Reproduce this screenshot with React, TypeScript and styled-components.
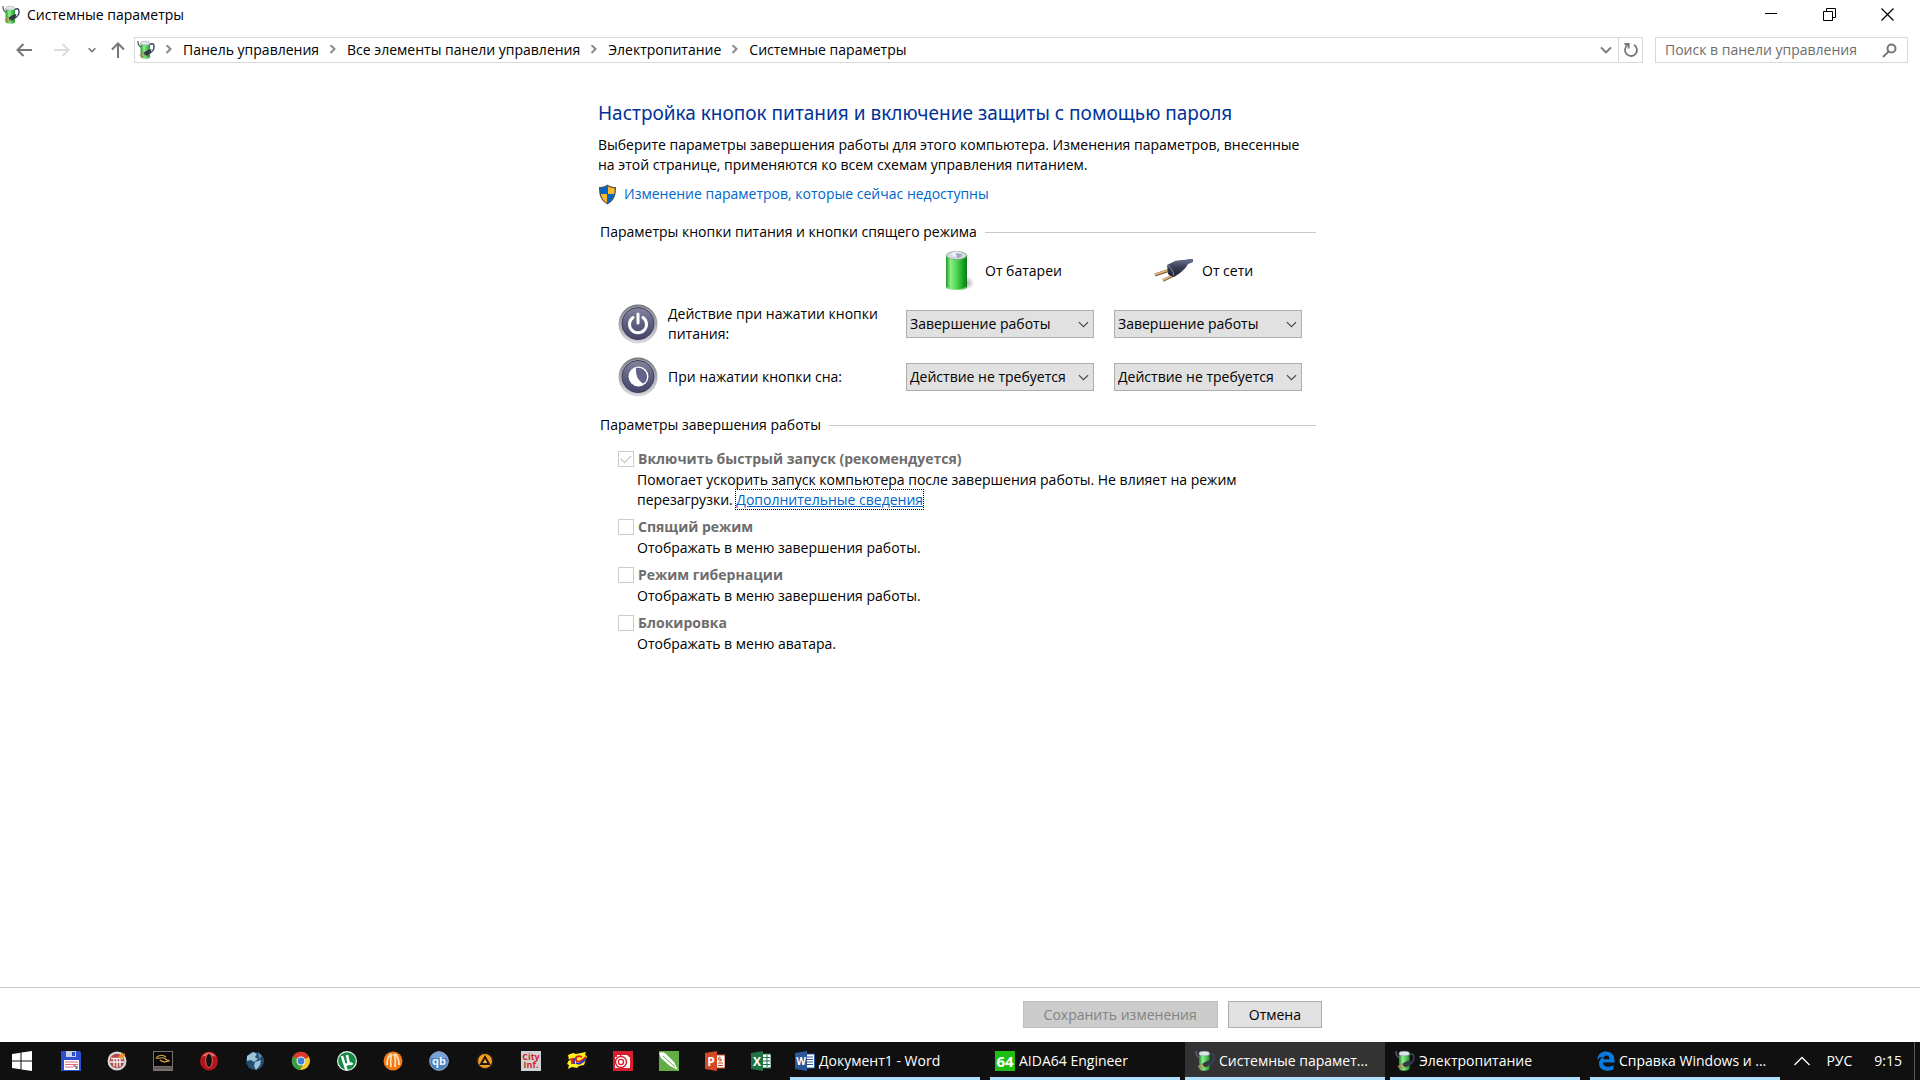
import React from "react";
import styled, { createGlobalStyle, css } from "styled-components";

const GlobalStyle = createGlobalStyle`
  *, *::before, *::after { box-sizing: border-box; }
  body {
    margin: 0;
    background: #fff;
    color: #000;
    font-family: "Open Sans", "Noto Sans", sans-serif;
    font-size: 14px;
    line-height: 20px;
  }
  button, input, select { font: inherit; }
  svg { display: block; flex: none; }
`;

const Window = styled.div`
  display: flex;
  flex-direction: column;
  min-height: 100vh;
`;

const TitleBar = styled.header`
  display: flex;
  align-items: center;
  justify-content: space-between;
  height: 30px;
  padding: 0 4px 0 2px;
`;

const Caption = styled.h1`
  display: flex;
  align-items: center;
  gap: 7px;
  margin: 0;
  font-size: 14px;
  font-weight: 400;
`;

const CaptionButtons = styled.div`
  display: flex;
  align-self: stretch;
`;

const PlainButton = styled.button`
  display: flex;
  align-items: center;
  justify-content: center;
  border: 0;
  padding: 0;
  background: none;
  color: inherit;
`;

const CaptionButton = styled(PlainButton)`
  width: 58px;
  height: 28px;
`;

const NavBar = styled.nav`
  display: flex;
  height: 26px;
  margin-top: 7px;
  padding-right: 12px;
`;

const History = styled.div`
  display: grid;
  grid-template-columns: 48px 28px 32px 20px;
  width: 134px;
  flex: none;
  color: #767676;
`;

const AddressBar = styled.div`
  display: flex;
  flex: 1;
  align-items: center;
  min-width: 0;
  border: 1px solid #d9d9d9;
  padding-left: 2px;
`;

const Crumbs = styled.ol`
  display: flex;
  flex: 1;
  margin: 0;
  padding: 0;
  list-style: none;
  white-space: nowrap;
  overflow: hidden;
`;

const Crumb = styled.li`
  display: flex;
  align-items: center;
  a { color: #000; text-decoration: none; }
  svg { margin: 0 11px 0 10px; }
`;

const AddressButton = styled(PlainButton)<{ $divided?: boolean }>`
  width: 24px;
  height: 24px;
  color: #767676;
  ${(p) => p.$divided && css`border-left: 1px solid #d9d9d9;`}
`;

const Search = styled.label`
  display: flex;
  align-items: center;
  width: 253px;
  margin-left: 12px;
  border: 1px solid #d9d9d9;
  padding: 0 10px 0 9px;
  color: #767676;
`;

const SearchInput = styled.input`
  flex: 1;
  min-width: 0;
  border: 0;
  padding: 0;
  outline: 0;
  background: none;
  &::placeholder { color: #6d6d6d; opacity: 1; }
`;

const Content = styled.main`
  flex: 1;
  width: 100%;
  max-width: 724px;
  margin: 0 auto;
  padding-top: 37px;
`;

const Heading = styled.h2`
  margin: 0 0 9px;
  color: #003399;
  font-family: "Noto Sans", "Open Sans", sans-serif;
  font-size: 19px;
  font-weight: 400;
  line-height: 26px;
`;

const Intro = styled.p`
  margin: 0 0 8px;
  white-space: nowrap;
`;

const AdminLink = styled.a`
  display: flex;
  align-items: center;
  gap: 7px;
  height: 22px;
  margin-bottom: 17px;
  color: #0066cc;
  text-decoration: none;
`;

const SectionTitle = styled.h3`
  display: flex;
  align-items: center;
  gap: 8px;
  margin: 0 6px 9px 2px;
  font-size: 14px;
  font-weight: 400;
  white-space: nowrap;
  &::after {
    content: "";
    flex: 1;
    height: 1px;
    background: #c8c8c8;
  }
`;

const ButtonGrid = styled.div`
  display: grid;
  grid-template-columns: 268px 188px 188px;
  grid-auto-rows: 40px;
  gap: 13px 20px;
  align-items: center;
  padding-left: 20px;
  margin-bottom: 18px;
`;

const Source = styled.div<{ $gap: number }>`
  display: flex;
  align-items: center;
  gap: ${(p) => p.$gap}px;
  padding-left: 40px;
`;

const ActionLabel = styled.div`
  display: flex;
  align-items: center;
  gap: 10px;
  grid-column: 1;
`;

const SelectBox = styled.div`
  display: grid;
  align-items: center;
  color: #444;
  & > * { grid-area: 1 / 1; }
  svg { justify-self: end; margin-right: 5px; pointer-events: none; }
`;

const Select = styled.select`
  appearance: none;
  width: 100%;
  height: 28px;
  border: 1px solid #adadad;
  border-radius: 0;
  padding: 0 20px 0 3px;
  background: #e1e1e1;
  color: #000;
`;

const Options = styled.div`
  padding: 4px 0 0 20px;
`;

const Option = styled.div`
  margin-bottom: 6px;
`;

const OptionLabel = styled.label`
  display: flex;
  align-items: center;
  gap: 4px;
  height: 22px;
  color: #6d6d6d;
  font-weight: 700;
`;

const Checkbox = styled.input`
  appearance: none;
  display: grid;
  place-items: center;
  width: 16px;
  height: 16px;
  margin: 0;
  border: 1px solid #ccc;
  background: #fff;
  &:checked::after {
    content: "";
    width: 10px;
    height: 6px;
    border: solid #bdbdbd;
    border-width: 0 0 1px 1px;
    transform: rotate(-45deg) translate(1px, -1px);
  }
`;

const OptionText = styled.p`
  margin: 0 0 0 19px;
`;

const MoreLink = styled.a`
  color: #0066cc;
  outline: 1px dotted #000;
`;

const Footer = styled.footer`
  border-top: 1px solid #c8c8c8;
  padding: 13px 0 14px;
`;

const FooterInner = styled.div`
  display: flex;
  justify-content: flex-end;
  gap: 10px;
  max-width: 724px;
  margin: 0 auto;
`;

const PushButton = styled.button`
  height: 27px;
  border: 1px solid #adadad;
  padding: 0 20px;
  background: #e1e1e1;
  color: #000;
  &:disabled {
    border-color: #bfbfbf;
    background: #ccc;
    color: #838383;
  }
`;

const Taskbar = styled.footer`
  display: flex;
  height: 38px;
  background: #101010;
  color: #fff;
`;

const StartButton = styled(PlainButton)`
  width: 44px;
  margin-right: 4px;
`;

const Launchers = styled.div`
  display: flex;
  margin-right: 1px;
`;

const Launcher = styled(PlainButton)`
  width: 46px;
`;

const Tasks = styled.div`
  display: flex;
  flex: 1;
  min-width: 0;
`;

const Task = styled(PlainButton)<{ $active?: boolean }>`
  flex: 0 1 200px;
  min-width: 0;
  justify-content: flex-start;
  gap: 4px;
  padding: 0 10px;
  background: linear-gradient(#b0e2ff, #b0e2ff) center bottom / ${(p) => (p.$active ? "100%" : "190px")} 3px no-repeat
    ${(p) => (p.$active ? "#333" : "transparent")};
  white-space: nowrap;
`;

const Tray = styled.div`
  display: flex;
  align-items: center;
  gap: 16px;
  margin-right: 5px;
  border-right: 1px solid #5a5a5a;
  padding-right: 12px;
  white-space: nowrap;
`;

const Clock = styled.time`
  margin-left: 6px;
`;

/* ---------- drawings ---------- */

const PowerPlanIcon = ({ width = 20 }: { width?: number }) => (
  <svg width={width} height="22" viewBox="0 0 20 22">
    <defs>
      <linearGradient id="planGreen">
        <stop offset="0" stopColor="#1f8a2c" />
        <stop offset=".35" stopColor="#8df08a" />
        <stop offset="1" stopColor="#1a9a2c" />
      </linearGradient>
    </defs>
    <path d="M1 1c0 4 1 6 4 7" fill="none" stroke="#5a607a" strokeWidth="1.4" />
    <path d="M14 5c4.500-3 5.500 1 4.500 5-.8 2.500-2.500 3.500-4 4.500" fill="none" stroke="#3d4262" strokeWidth="1.600" />
    <path d="M4 3.500v15c0 3 10.500 3 10.500 0v-15z" fill="url(#planGreen)" />
    <ellipse cx="9.250" cy="3.500" rx="5.200" ry="2.200" fill="#dfe5e8" stroke="#98a2a8" strokeWidth=".6" />
    <path d="M7 14l5-3 4-1-1 4-3 3-3 0z" fill="#343845" />
    <path d="M8 14.500l-5 2.500M10 16.500l-5 3" stroke="#b98e5a" strokeWidth="1.400" />
  </svg>
);

const DownChevron = ({ w, size }: { w: number; size: number }) => (
  <svg width={size} height={size} viewBox="0 0 10 10" fill="none" stroke="currentColor" strokeWidth={w}>
    <path d="M.8 2.800l4.200 4.200 4.200-4.200" />
  </svg>
);

const Arrow = ({ turn, color }: { turn: number; color: string }) => (
  <svg width="16" height="16" viewBox="0 0 16 16" fill="none" stroke={color} strokeWidth="2">
    <path d="M16 8H1.500M7.500 2l-6 6 6 6" transform={`rotate(${turn} 8 8)`} />
  </svg>
);

const ShieldIcon = () => (
  <svg width="19" height="21" viewBox="0 0 19 21">
    <path d="M9.500.5C7 2.500 4 3 1 3c0 8 1 13 8.500 17.500C17 16 18 11 18 3c-3 0-6-.5-8.500-2.500z" fill="#4d5358" />
    <path d="M9 2.300C7 3.700 4.500 4.200 2.300 4.300c0 2.200.1 4 .5 5.700H9z" fill="#0067c8" />
    <path d="M10 2.300c2 1.400 4.500 1.900 6.700 2 0 2.200-.1 4-.5 5.700H10z" fill="#fcb92c" />
    <path d="M9 10H2.800c.8 4 2.700 6.800 6.200 9z" fill="#fcb92c" />
    <path d="M10 10h6.200c-.8 4-2.700 6.800-6.200 9z" fill="#0067c8" />
  </svg>
);

const BatteryIcon = () => (
  <svg width="29" height="40" viewBox="0 0 29 40">
    <defs>
      <linearGradient id="cell">
        <stop offset="0" stopColor="#1d9a24" />
        <stop offset=".22" stopColor="#8cf088" />
        <stop offset=".5" stopColor="#4fd650" />
        <stop offset=".85" stopColor="#149a1f" />
        <stop offset="1" stopColor="#0c7a16" />
      </linearGradient>
      <radialGradient id="cellShadow">
        <stop offset="0" stopColor="#777" stopOpacity=".7" />
        <stop offset="1" stopColor="#999" stopOpacity="0" />
      </radialGradient>
    </defs>
    <ellipse cx="20" cy="32" rx="9" ry="7" fill="url(#cellShadow)" />
    <path d="M0 4v32c0 4 21 4 21 0V4z" fill="url(#cell)" />
    <path d="M1 36c1 3.500 18 3.500 19 0" fill="none" stroke="#a5e8a0" strokeWidth=".8" />
    <ellipse cx="10.500" cy="4.500" rx="10.200" ry="4" fill="#d3dade" stroke="#72a878" strokeWidth=".8" />
    <ellipse cx="10.500" cy="3" rx="5" ry="2.500" fill="#eceef5" />
    <path d="M10 2l6 1-1 3-4 1z" fill="#a4a3c6" />
  </svg>
);

const PlugIcon = () => (
  <svg width="40" height="24" viewBox="0 0 40 24">
    <defs>
      <linearGradient id="plug" x1="0" y1="0" x2="0" y2="1">
        <stop offset="0" stopColor="#6b7290" />
        <stop offset=".5" stopColor="#363b52" />
        <stop offset="1" stopColor="#1d2030" />
      </linearGradient>
    </defs>
    <path d="M1 16l15-5M9 21.500l12-6" stroke="#8a6038" strokeWidth="3" />
    <path d="M1 15.500l15-5M9 21l12-6" stroke="#e3b686" strokeWidth="1.800" />
    <path d="M13 6l8-4c3-1 6-1 9-1l5-1 4 0v3l-5 2c-2 4-5 6-8 9l-6 4c-2-1-4-1-6-3z" fill="url(#plug)" />
    <path d="M13 6c4 2 6 6 7 11" stroke="#8a91ac" fill="none" />
  </svg>
);

const RoundIcon = ({ kind }: { kind: "power" | "sleep" }) => (
  <svg width="40" height="40" viewBox="0 0 40 40">
    <defs>
      <linearGradient id="rim" x1="0" y1="0" x2="0" y2="1">
        <stop offset="0" stopColor="#77777f" />
        <stop offset="1" stopColor="#dcdce0" />
      </linearGradient>
      <linearGradient id="face" x1="0" y1="0" x2="0" y2="1">
        <stop offset="0" stopColor="#85859f" />
        <stop offset=".5" stopColor="#5f5f80" />
        <stop offset="1" stopColor="#45456a" />
      </linearGradient>
    </defs>
    <circle cx="20" cy="20" r="19.500" fill="url(#rim)" />
    <circle cx="20" cy="19.500" r="17" fill="#b0b0c0" />
    <circle cx="20" cy="19.500" r="16" fill="url(#face)" stroke="#3e3e5c" />
    {kind === "power" ? (
      <g fill="none" stroke="#fff" strokeWidth="3" strokeLinecap="round">
        <path d="M15 13.500a8.500 8.500 0 1 0 10 0" />
        <path d="M20 10v9" />
      </g>
    ) : (
      <g>
        <circle cx="20.500" cy="19.500" r="10" fill="#fff" />
        <path d="M18 11c6-1.500 11.500 3.500 11 9.500-.3 3-2 5.500-4 6-5-3-7.500-8-7-15.500z" fill="#62628a" />
      </g>
    )}
  </svg>
);

const I = ({ children }: { children: React.ReactNode }) => (
  <svg width="20" height="20" viewBox="0 0 20 20">{children}</svg>
);

const glyph = { fontFamily: "Open Sans, sans-serif", fontWeight: 700, textAnchor: "middle" as const };

const launchers: { name: string; art: React.ReactNode }[] = [
  { name: "Total Commander", art: <>
    <path d="M0 0h19l1 2v18H0z" fill="#2d4fd0" /><path d="M5 0h10v6H5z" fill="#c9d3e6" /><path d="M11 1h3v4h-3z" fill="#2d4fd0" />
    <path d="M3 9h15v10H3z" fill="#fff" /><path d="M4 11h13M4 13.500h13M4 16h8" stroke="#e26a76" /><path d="M12 15h3v3M16 15v3" stroke="#555" fill="none" /></> },
  { name: "Nero", art: <>
    <circle cx="10" cy="10" r="9.500" fill="#d9d6d6" /><circle cx="10" cy="10" r="7.300" fill="#b04a48" />
    <path d="M4 7.500h12M3 11h14M7 7.500v8M10 7.500v9M13 7.500v8" stroke="#eee" strokeWidth="1.400" /><path d="M11 5l3-1 1-3 1 2 2-1-1 4-3 2z" fill="#ff8f19" /></> },
  { name: "Монитор", art: <>
    <path d="M0 0h20v20H0z" fill="#77706c" /><path d="M1 1h18v14H1z" fill="#090909" />
    <path d="M3 7c3-4 8-3 10-1M3 7c3 1 5-1 8 0 2 1 3 3 6 3M7 9c3 3 7 2 9 0" fill="none" stroke="#d6a044" strokeWidth="1.200" /><path d="M1 17h18" stroke="#4c4542" /></> },
  { name: "Opera", art: <>
    <ellipse cx="10" cy="10" rx="9" ry="9.500" fill="#b6131b" /><path d="M3 6c3-6 11-6 14 0-4-2-10-2-14 0z" fill="#e66c6c" />
    <ellipse cx="10" cy="9.500" rx="3.300" ry="7" fill="#111" stroke="#e77" strokeWidth=".8" /></> },
  { name: "Глобус", art: <>
    <circle cx="10" cy="10" r="9" fill="#254d70" /><path d="M2 5l6-4 4 2-2 3 3 2-4 3-3-2-4 1zM10 11l6-2-1 5-4 5-2-4z" fill="#9fc3d6" /><path d="M13 1l4 4-3 3z" fill="#608cac" /></> },
  { name: "Chrome", art: <>
    <circle cx="10" cy="10" r="9" fill="#f6c526" /><path d="M10 10L2 5.500A9 9 0 0 1 18 6z" fill="#d93a2d" /><path d="M10 10L2 5.500A9 9 0 0 0 9 19l4-7z" fill="#3c9d42" />
    <circle cx="10" cy="10" r="4.500" fill="#f2f2f2" /><circle cx="10" cy="10" r="3.400" fill="#3f7fd8" /></> },
  { name: "µTorrent", art: <>
    <circle cx="10" cy="10" r="10" fill="#eef7ef" /><circle cx="10" cy="10" r="8.800" fill="#178a45" />
    <path d="M5 5l2 7c.6 2.500 5 2 4.500-.5L10 4M11.500 11c1 3 3 2 4 1M7.500 13l2 6" fill="none" stroke="#fff" strokeWidth="2.500" /></> },
  { name: "Оранжевый", art: <>
    <circle cx="10" cy="10" r="9.500" fill="#f27a14" /><path d="M4 14Q4 6 8 3M8 16Q7 8 9 3M12 16Q13 8 11 3M16 14Q16 6 12 3" fill="none" stroke="#ffe3bd" strokeWidth="1.700" /></> },
  { name: "qBittorrent", art: <>
    <circle cx="10" cy="10" r="9.300" fill="#4c7fbd" stroke="#9ab9de" /><path d="M2 7a8.500 8.500 0 0 1 16 0z" fill="#8fb3e0" opacity=".7" />
    <text x="10" y="14" fontSize="11" fill="#e8f2ff" style={glyph}>qb</text></> },
  { name: "AIMP", art: <>
    <circle cx="10" cy="10" r="8.500" fill="#2b2118" /><circle cx="10" cy="10" r="7" fill="#f79d1e" /><path d="M10 6l4 7H6z" fill="#f7b84b" stroke="#20160c" strokeWidth="2" /></> },
  { name: "City Info", art: <>
    <path d="M0 0h20v20H0z" fill="#cfd3d6" />
    <text x="10" y="9" fontSize="9" fill="#d81e2a" style={glyph}>City</text>
    <text x="10" y="17" fontSize="9" fill="#d81e2a" style={glyph}>Inf.</text></> },
  { name: "1C", art: <>
    <path d="M1 4l5-2 3 1 10-2-1 3 2 1-2 6-1 3-5 1-2 2-5-1-4 2 1-4-2-1 2-4z" fill="#fff21a" />
    <path d="M2 9l3-1v5M15 6c-4-2-7 0-6 3 1 3 5 2 10-3" fill="none" stroke="#e01b22" strokeWidth="1.800" /><path d="M7 7v6M9 12c4 2 6-1 10-4" fill="none" stroke="#2131c7" strokeWidth="1.800" /></> },
  { name: "Фото", art: <>
    <path d="M0 0h20v20H0z" fill="#d5202f" /><path d="M2 6h2V4h3v2l2-2h5l2 2h1v11H2z" fill="#fff" /><circle cx="8" cy="11" r="5.500" fill="#fff" stroke="#d5202f" strokeWidth="1.400" /><circle cx="8" cy="11" r="2.600" fill="none" stroke="#d5202f" strokeWidth="1.300" /></> },
  { name: "CorelDRAW", art: <>
    <path d="M0 0h20v20H0z" fill="#62ad46" /><path d="M0 2c2-1 5-1 7 1l8 8 4 8-8-4-9-8z" fill="#fff" /><path d="M4 5l12 11" stroke="#62ad46" /></> },
  { name: "PowerPoint", art: <>
    <path d="M11 4h9v13h-9z" fill="#fff" stroke="#d24726" /><path d="M13 12h5M13 14.500h5M15 6a2 2 0 1 0 2 3h-2z" stroke="#d24726" fill="none" />
    <path d="M0 2l12-2v20L0 18z" fill="#d24726" /><text x="6" y="14.500" fontSize="12" fill="#fff" style={glyph}>P</text></> },
  { name: "Excel", art: <>
    <path d="M11 3h9v14h-9z" fill="#fff" stroke="#217346" /><path d="M12 6.500h7M12 10h7M12 13.500h7M16 4v12" stroke="#217346" />
    <path d="M0 2l12-2v20L0 18z" fill="#217346" /><text x="6" y="14.500" fontSize="12" fill="#fff" style={glyph}>X</text></> },
];

const WordIcon = () => (
  <I>
    <path d="M11 3h8.500v14H11z" fill="#fff" stroke="#2b579a" /><path d="M12 6h6M12 8.500h6M12 11h6M12 13.500h6" stroke="#2b579a" />
    <path d="M0 2l12-2v20L0 18z" fill="#2b579a" /><text x="6" y="14" fontSize="10" fill="#fff" style={glyph}>W</text>
  </I>
);

const AidaIcon = () => (
  <I>
    <path d="M0 0h20v20H0z" fill="#1cbf12" /><text x="10" y="15.500" fontSize="15" fill="#fff" style={glyph}>64</text>
  </I>
);

const EdgeIcon = () => (
  <svg width="20" height="20" viewBox="-2 0 20 20">
    <path d="M0 9C1 3 4.500.5 9 .5c5.500 0 8.500 4 8.500 8.500v2.500H6c0 3 2.500 4.300 5.200 4.300 2 0 3.800-.6 5.300-1.500v4c-2 1-4 1.400-6.200 1.400C5.500 19.700 2 17 2 12.500 2 9.500 3.600 7 6.300 5.800 3.500 6 1.500 7.200 0 9zm6.200-.8h6.300C12.500 6 11.600 4.600 9.600 4.600 7.600 4.600 6.500 6.300 6.200 8.200z" fill="#0a7bdc" fillRule="evenodd" />
  </svg>
);

const crumbs = ["Панель управления", "Все элементы панели управления", "Электропитание", "Системные параметры"];
const actions = ["Завершение работы", "Действие не требуется"];

const ActionSelect = ({ value, label }: { value: string; label: string }) => (
  <SelectBox>
    <Select defaultValue={value} aria-label={label}>
      {actions.map((a) => <option key={a}>{a}</option>)}
    </Select>
    <DownChevron size={11} w={1} />
  </SelectBox>
);

const PowerOption = ({ id, title, checked, children }: { id: string; title: string; checked?: boolean; children: React.ReactNode }) => (
  <Option>
    <OptionLabel htmlFor={id}>
      <Checkbox id={id} type="checkbox" defaultChecked={checked} disabled />
      {title}
    </OptionLabel>
    <OptionText>{children}</OptionText>
  </Option>
);

export default function App() {
  return (
    <Window>
      <GlobalStyle />
      <TitleBar>
        <Caption><PowerPlanIcon width={18} />Системные параметры</Caption>
        <CaptionButtons>
          <CaptionButton aria-label="Свернуть"><svg width="12" height="12"><path d="M0 5.500h12" stroke="#000" /></svg></CaptionButton>
          <CaptionButton aria-label="Восстановить">
            <svg width="13" height="13" fill="none" stroke="#000"><path d="M.5 3.500h9v9h-9zM3.500 3V.5h9v9H10" /></svg>
          </CaptionButton>
          <CaptionButton aria-label="Закрыть"><svg width="13" height="13"><path d="M.5.5l12 12M12.500.5l-12 12" stroke="#000" strokeWidth="1.200" /></svg></CaptionButton>
        </CaptionButtons>
      </TitleBar>

      <NavBar>
        <History>
          <PlainButton aria-label="Назад"><Arrow turn={0} color="#767676" /></PlainButton>
          <PlainButton aria-label="Вперед"><Arrow turn={180} color="#dcdcdc" /></PlainButton>
          <PlainButton aria-label="Журнал"><DownChevron w={2} size={8} /></PlainButton>
          <PlainButton aria-label="Вверх"><Arrow turn={90} color="#767676" /></PlainButton>
        </History>
        <AddressBar>
          <PowerPlanIcon width={18} />
          <Crumbs>
            {crumbs.map((c) => (
              <Crumb key={c}>
                <svg width="7" height="10" viewBox="0 0 7 10" fill="none" stroke="#8a8a8a" strokeWidth="2"><path d="M1.500 0l4 4-4 4" /></svg>
                <a href="#">{c}</a>
              </Crumb>
            ))}
          </Crumbs>
          <AddressButton aria-label="Предыдущие расположения"><DownChevron w={1.6} size={12} /></AddressButton>
          <AddressButton $divided aria-label="Обновить">
            <svg width="16" height="16" viewBox="0 0 16 16" fill="none" stroke="currentColor" strokeWidth="1.800">
              <path d="M11 2.800a6 6 0 1 1-6.500.3" /><path d="M1.500 2h4.200v4.500" />
            </svg>
          </AddressButton>
        </AddressBar>
        <Search>
          <SearchInput type="text" aria-label="Поиск" placeholder="Поиск в панели управления" />
          <svg width="15" height="15" viewBox="0 0 15 15" fill="none" stroke="currentColor" strokeWidth="2">
            <circle cx="9.500" cy="5.500" r="4" /><path d="M6.500 8.500L1 14" />
          </svg>
        </Search>
      </NavBar>

      <Content>
        <Heading>Настройка кнопок питания и включение защиты с помощью пароля</Heading>
        <Intro>
          Выберите параметры завершения работы для этого компьютера. Изменения параметров, внесенные<br />
          на этой странице, применяются ко всем схемам управления питанием.
        </Intro>
        <AdminLink href="#"><ShieldIcon />Изменение параметров, которые сейчас недоступны</AdminLink>

        <SectionTitle>Параметры кнопки питания и кнопки спящего режима</SectionTitle>
        <ButtonGrid>
          <span />
          <Source $gap={10}><BatteryIcon />От батареи</Source>
          <Source $gap={8}><PlugIcon />От сети</Source>
          <ActionLabel><RoundIcon kind="power" />Действие при нажатии кнопки питания:</ActionLabel>
          <ActionSelect value={actions[0]} label="Кнопка питания, от батареи" />
          <ActionSelect value={actions[0]} label="Кнопка питания, от сети" />
          <ActionLabel><RoundIcon kind="sleep" />При нажатии кнопки сна:</ActionLabel>
          <ActionSelect value={actions[1]} label="Кнопка сна, от батареи" />
          <ActionSelect value={actions[1]} label="Кнопка сна, от сети" />
        </ButtonGrid>

        <SectionTitle>Параметры завершения работы</SectionTitle>
        <Options>
          <PowerOption id="fast" title="Включить быстрый запуск (рекомендуется)" checked>
            Помогает ускорить запуск компьютера после завершения работы. Не влияет на режим<br />
            перезагрузки. <MoreLink href="#">Дополнительные сведения</MoreLink>
          </PowerOption>
          <PowerOption id="sleep" title="Спящий режим">Отображать в меню завершения работы.</PowerOption>
          <PowerOption id="hibernate" title="Режим гибернации">Отображать в меню завершения работы.</PowerOption>
          <PowerOption id="lock" title="Блокировка">Отображать в меню аватара.</PowerOption>
        </Options>
      </Content>

      <Footer>
        <FooterInner>
          <PushButton disabled>Сохранить изменения</PushButton>
          <PushButton>Отмена</PushButton>
        </FooterInner>
      </Footer>

      <Taskbar>
        <StartButton aria-label="Пуск">
          <svg width="20" height="20" viewBox="0 0 20 20"><path d="M0 3l8.500-1.200v7.700H0zM9.500 1.600L20 0v9.500H9.500zM0 10.500h8.500v7.700L0 17zM9.500 10.500H20V20L9.500 18.400z" fill="#fff" /></svg>
        </StartButton>
        <Launchers>
          {launchers.map((l) => (
            <Launcher key={l.name} aria-label={l.name}><I>{l.art}</I></Launcher>
          ))}
        </Launchers>
        <Tasks>
          <Task><WordIcon /><span>Документ1 - Word</span></Task>
          <Task><AidaIcon /><span>AIDA64 Engineer</span></Task>
          <Task $active><PowerPlanIcon /><span>Системные парамет...</span></Task>
          <Task><PowerPlanIcon /><span>Электропитание</span></Task>
          <Task><EdgeIcon /><span>Справка Windows и ...</span></Task>
        </Tasks>
        <Tray>
          <PlainButton aria-label="Скрытые значки">
            <svg width="16" height="10" viewBox="0 0 16 10" fill="none" stroke="#fff" strokeWidth="1.300"><path d="M.5 9L8 1.500 15.500 9" /></svg>
          </PlainButton>
          <span>РУС</span>
          <Clock>9:15</Clock>
        </Tray>
      </Taskbar>
    </Window>
  );
}
